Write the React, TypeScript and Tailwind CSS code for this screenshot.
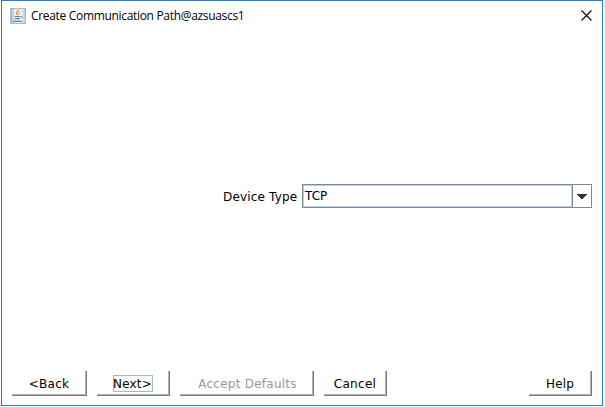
import React from "react";

type ButtonProps = {
  label: string;
  className: string;
  textClass?: string;
  focused?: boolean;
  disabled?: boolean;
};

function BevelButton({ label, className, textClass = "", focused, disabled }: ButtonProps) {
  return (
    <button
      className={`flex h-[25px] shrink-0 border-r border-b border-[#7c7c7c] ${className}`}
      disabled={disabled}
    >
      <span className="flex h-6 w-full items-start justify-center border-r border-b border-[#b0b0b0] pt-1">
        <span
          className={`flex h-[17px] items-center justify-center border leading-[15px] whitespace-nowrap ${
            focused ? "border-[#a3b8cc]" : "border-transparent"
          } ${disabled ? "text-[#999999]" : "text-black"} ${textClass}`}
        >
          <span className="pt-px">{label}</span>
        </span>
      </span>
    </button>
  );
}

function JavaIcon() {
  return (
    <svg width="16" height="16" viewBox="0 0 16 16" fill="none">
      <defs>
        <linearGradient id="tile" x1="0" y1="0" x2="1" y2="0">
          <stop stopColor="#9bb0c1" />
          <stop offset="0.35" stopColor="#f4f7f9" />
          <stop offset="0.7" stopColor="#f4f7f9" />
          <stop offset="1" stopColor="#b3c3cf" />
        </linearGradient>
      </defs>
      <rect x="0.5" y="0.5" width="15" height="15" fill="url(#tile)" stroke="#a9bac7" />
      <path d="M8.5 1.5C8.8 3 6 3.9 6.4 5.4c.2.7 1 1.2 1.1 1.8" stroke="#e88332" strokeWidth="1.2" />
      <path d="M10.3 3.8C8.3 4.6 8 5.3 8.6 6.2c.3.4.2.7-.1 1" stroke="#e88332" />
      <path d="M4.5 8.6h6M5 10.6h5M3 13.4h9" stroke="#527995" />
      <path d="M5 12.1h5" stroke="#7f9bb0" strokeWidth="0.7" />
      <path d="M11 8.5c1.9-.3 1.8 1.3 0 2" stroke="#7895aa" />
    </svg>
  );
}

export default function App() {
  return (
    <div className="h-[407px] w-[605px] bg-white pl-px text-black">
      <div className="flex h-[406px] w-[602px] flex-col border border-[#1b7fd2] font-['DejaVu_Sans','Liberation_Sans',sans-serif] text-[12px]">
        <header className="flex h-[30px] shrink-0 items-center pl-2">
          <JavaIcon />
          <h1 className="ml-[5px] w-[214px] font-['Open_Sans','Noto_Sans',sans-serif] text-[12px] leading-4 tracking-[-0.32px] whitespace-nowrap">
            Create Communication Path@azsuascs1
          </h1>
          <button aria-label="Close" className="mr-[10px] mb-px ml-auto">
            <svg width="11" height="11" viewBox="0 0 11 11" stroke="#000" strokeWidth="1.1">
              <path d="M.5.5l10 10M10.5.5l-10 10" />
            </svg>
          </button>
        </header>

        <main className="flex grow items-start pt-[153px] pl-[221px]">
          <label className="mt-[5px] w-[79px] shrink-0 text-[12px] leading-4 tracking-[0.17px] whitespace-nowrap">
            Device Type
          </label>
          <div className="flex h-6 w-[290px] border border-[#7a8a99]">
            <div className="flex w-[269px] items-start border border-[#b8cfe5] pl-px leading-[20px]">TCP</div>
            <button aria-label="Open list" className="flex w-[19px] grow items-center justify-start border-l border-[#7a8a99] pl-1">
              <svg width="10" height="5" viewBox="0 0 10 5" fill="#333" shapeRendering="crispEdges">
                <path d="M0 0h10v1H9v1H8v1H7v1H6v1H4V4H3V3H2V2H1V1H0z" />
              </svg>
            </button>
          </div>
        </main>

        <footer className="flex h-[34px] shrink-0 items-start pr-[10px] pl-[10px]">
          <BevelButton label="<Back" className="w-[75px]" textClass="tracking-[0.3px] pl-px" />
          <BevelButton label="Next>" className="ml-[10px] w-[73px]" textClass="tracking-[0.2px] w-10" focused />
          <BevelButton label="Accept Defaults" className="ml-[10px] w-[134px]" textClass="tracking-[0.25px] pl-[3px]" disabled />
          <BevelButton label="Cancel" className="ml-[10px] w-[63px]" textClass="tracking-[0.3px] pl-px" />
          <BevelButton label="Help" className="ml-auto w-[63px]" textClass="tracking-[0.2px] pl-px" />
        </footer>
      </div>
    </div>
  );
}
